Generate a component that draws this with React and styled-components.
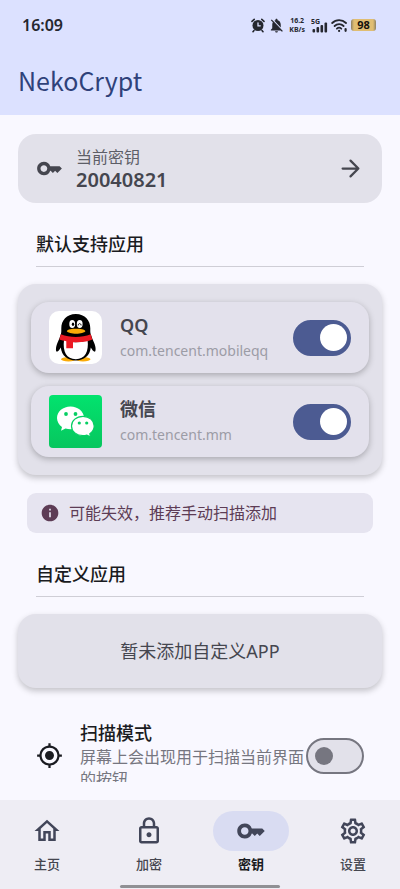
import React, { useState } from 'react'
import styled, { createGlobalStyle } from 'styled-components'
import {
  MdInfo,
  MdKey,
  MdMyLocation,
  MdNotificationsOff,
  MdOutlineHome,
  MdOutlineLock,
  MdOutlineSettings
} from 'react-icons/md'

const GlobalStyle = createGlobalStyle`
  * {
    box-sizing: border-box;
  }

  body {
    margin: 0;
    background: #f9f8ff;
    color: #1a1b21;
    font-family: 'Noto Sans', 'Noto Sans CJK SC', sans-serif;
  }

  h1, h2, h3, p {
    margin: 0;
  }
`

const Screen = styled.div`
  display: flex;
  flex-direction: column;
  height: 100vh;
`

const Header = styled.header`
  background: #dce1ff;
`

const StatusBar = styled.div`
  display: flex;
  align-items: center;
  justify-content: space-between;
  padding: 12px 24px 12px 22px;
  color: #25272f;
`

const Clock = styled.time`
  font-size: 16px;
  font-weight: 600;
  line-height: 26px;
`

const StatusIcons = styled.div`
  display: flex;
  align-items: center;
  gap: 3px;
`

const Speed = styled.div`
  margin: 0 3px 0 1px;
  font-size: 7px;
  font-weight: 700;
  line-height: 9px;
  text-align: center;
`

const SpeedLine = styled.span`
  display: block;
`

const Battery = styled.div`
  width: 25px;
  border-radius: 3px;
  background: linear-gradient(90deg, #8d8063, #e0bd72 12%, #e0bd72 88%, #8d8063);
  color: #15130d;
  font-size: 11px;
  font-weight: 700;
  line-height: 12px;
  text-align: center;
`

const AppTitle = styled.h1`
  padding: 12px 18px 17px;
  color: #2f417a;
  font-family: 'Noto Sans CJK SC', 'Noto Sans', sans-serif;
  font-size: 25px;
  font-weight: 400;
  line-height: 36px;
`

const Content = styled.main`
  flex: 1;
  min-height: 0;
  margin-bottom: 18px;
  padding: 19px 18px 0;
  overflow: hidden;
`

const KeyCard = styled.button`
  display: flex;
  align-items: center;
  gap: 13px;
  width: 100%;
  padding: 12px 18px;
  border: 0;
  border-radius: 18px;
  background: #e2e1ea;
  color: #45464f;
  font-family: inherit;
  text-align: left;
`

const KeyText = styled.span`
  flex: 1;
`

const KeyLabel = styled.span`
  display: block;
  color: #5d5e67;
  font-size: 16px;
  line-height: 22px;
`

const KeyValue = styled.strong`
  display: block;
  font-size: 20px;
  font-weight: 600;
  line-height: 23px;
`

const SectionTitle = styled.h2`
  margin: 28px 18px 17px;
  padding-bottom: 9px;
  border-bottom: 1px solid #cfced6;
  font-size: 18px;
  font-weight: 500;
  line-height: 26px;
`

const Panel = styled.div`
  border-radius: 18px;
  background: #e2e1ea;
  box-shadow: 0 3px 6px rgba(0, 0, 0, 0.22);
`

const AppList = styled(Panel)`
  display: grid;
  gap: 13px;
  padding: 18px 13px;
`

const AppRow = styled.label`
  display: flex;
  align-items: center;
  gap: 18px;
  padding: 9px 18px;
  border-radius: 18px;
  background: #e3e1ec;
  box-shadow: 0 2px 6px rgba(0, 0, 0, 0.26);
`

const AppLogo = styled.svg`
  flex: none;
  width: 53px;
  height: 53px;
`

const AppInfo = styled.span`
  flex: 1;
  min-width: 0;
`

const AppName = styled.span`
  display: block;
  color: #45464f;
  font-size: 18px;
  font-weight: 600;
  line-height: 26px;
`

const PackageName = styled.span`
  display: block;
  color: #9c9ca6;
  font-size: 14px;
  line-height: 26px;
`

const Switch = styled.input.attrs({ type: 'checkbox', role: 'switch' })`
  appearance: none;
  display: flex;
  flex: none;
  align-items: center;
  width: 58px;
  height: 36px;
  margin: 0;
  padding: 0 7px;
  border: 2px solid #767680;
  border-radius: 18px;
  background: #e2e1ea;

  &::before {
    content: '';
    width: 18px;
    height: 18px;
    border-radius: 50%;
    background: #767680;
  }

  &:checked {
    justify-content: flex-end;
    padding: 0 2px;
    border-color: #4c5b92;
    background: #4c5b92;
  }

  &:checked::before {
    width: 27px;
    height: 27px;
    background: #fff;
  }
`

const Notice = styled.div`
  display: flex;
  align-items: center;
  gap: 9px;
  margin: 18px 9px 0;
  padding: 8px 13px;
  border-radius: 9px;
  background: #e6e4f0;
  color: #5d3c55;
  font-size: 16px;
  line-height: 24px;
`

const EmptyPanel = styled(Panel)`
  padding: 24px 18px;
  color: #45464f;
  font-size: 18px;
  line-height: 26px;
  text-align: center;
`

const ScanRow = styled.label`
  display: flex;
  align-items: center;
  margin-top: 33px;
  padding: 0 18px;
`

const ScanText = styled.span`
  flex: 1;
  min-width: 0;
  padding-left: 17px;
`

const ScanTitle = styled.span`
  display: block;
  font-size: 18px;
  font-weight: 500;
  line-height: 25px;
`

const ScanHint = styled.span`
  display: block;
  color: #767680;
  font-size: 16px;
  line-height: 22px;
`

const BottomBar = styled.nav`
  background: #eeedf4;
`

const Tabs = styled.div`
  display: grid;
  grid-template-columns: repeat(4, 1fr);
  gap: 8px;
  padding: 11px 0;
`

const Tab = styled.a`
  display: flex;
  flex-direction: column;
  align-items: center;
  gap: 3px;
  color: ${props => props.$active ? '#1a1b21' : '#45464f'};
  font-size: 13px;
  font-weight: ${props => props.$active ? 600 : 500};
  line-height: 20px;
  text-decoration: none;
`

const TabIcon = styled.span`
  display: flex;
  align-items: center;
  justify-content: center;
  width: 76px;
  height: 40px;
  border-radius: 20px;
  background: ${props => props.$active ? '#d9dcf2' : 'transparent'};
  color: #424659;
`

const HomeIndicator = styled.div`
  width: 40%;
  height: 3px;
  margin: 0 auto 1px;
  border-radius: 2px;
  background: #909094;
`

const AlarmIcon = () => (
  <svg width='14' height='15' viewBox='0 0 14 15' fill='none' stroke='currentColor' strokeLinecap='round' aria-hidden='true'>
    <circle cx='7' cy='7.500' r='5.500' fill='currentColor' stroke='none' />
    <path d='M1 3.400l2.200-2M13 3.400l-2.200-2M3 12.500l-1 1.200M11 12.500l1 1.200' strokeWidth='1.600' />
    <path d='M7 4.800v3h2.300' stroke='#dce1ff' strokeWidth='1.300' />
  </svg>
)

const SignalIcon = () => (
  <svg width='17' height='15' viewBox='0 0 17 15' fill='currentColor' aria-hidden='true'>
    <text x='0' y='5.500' fontSize='7' fontWeight='700'>5G</text>
    <rect x='1.500' y='11' width='2.600' height='3.500' rx='1' />
    <rect x='5.500' y='9' width='2.600' height='5.500' rx='1' />
    <rect x='9.500' y='7' width='2.600' height='7.500' rx='1' />
    <rect x='13.500' y='4.500' width='2.600' height='10' rx='1' />
  </svg>
)

const WifiIcon = () => (
  <svg width='17' height='15' viewBox='0 0 17 15' fill='none' stroke='currentColor' strokeWidth='1.8' strokeLinecap='round' aria-hidden='true'>
    <path d='M1.200 5a9.800 9.800 0 0 1 13.800 0' />
    <path d='M3.600 8a6.300 6.300 0 0 1 9 0' />
    <path d='M5.900 10.700a3.200 3.200 0 0 1 4.400 0' />
    <circle cx='8.100' cy='12.900' r='1.100' fill='currentColor' stroke='none' />
    <path d='M14.600 11v1.800' strokeWidth='2.200' />
  </svg>
)

const ArrowIcon = () => (
  <svg width='27' height='27' viewBox='0 0 24 24' fill='none' stroke='currentColor' strokeWidth='2' strokeLinecap='round' strokeLinejoin='round' aria-hidden='true'>
    <path d='M5 12h14M12 5l7 7-7 7' />
  </svg>
)

const QQLogo = () => (
  <AppLogo viewBox='0 0 53 53' aria-hidden='true'>
    <rect width='53' height='53' rx='10' fill='#fff' />
    <ellipse cx='19.500' cy='48.200' rx='7.500' ry='2.200' fill='#faab07' />
    <ellipse cx='34' cy='48.200' rx='7.500' ry='2.200' fill='#faab07' />
    <path d='M26.800 3C17.500 3 12.300 9.500 12.300 17.500c0 2 .1 3.400-.3 5.200-1 3.300-2.200 6.200-3.600 9.300-1.700 4-1.800 7.800-.8 8.600.9.7 2.900-1.700 4.200-4.100.7 8 7 13 15 13s14.300-5 15-13c1.300 2.400 3.300 4.800 4.200 4.100 1-.8.9-4.600-.8-8.600-1.400-3.100-2.600-6-3.600-9.300-.4-1.800-.3-3.200-.3-5.200C41.300 9.500 36.100 3 26.800 3z' fill='#000' />
    <path d='M15 29c-1.500 11.500 2.500 19.200 11.800 19.200S40 40.500 38.600 29c-7 3-16.600 3-23.600 0z' fill='#fff' />
    <ellipse cx='23.200' cy='13' rx='2.900' ry='3.900' fill='#fff' />
    <ellipse cx='30.700' cy='13' rx='2.900' ry='3.900' fill='#fff' />
    <ellipse cx='24' cy='13.300' rx='1.200' ry='1.700' fill='#000' />
    <path d='M29.200 14c.1-2 2.700-2 2.900 0' fill='none' stroke='#000' strokeWidth='1' strokeLinecap='round' />
    <path d='M17.800 20.300c.8-2 5-2.500 9.300-2.500s8.500.5 9.300 2.500c-.8 1.200-5 2.500-9.300 2.500s-8.500-1.300-9.300-2.500z' fill='#faab07' />
    <path d='M11.800 23.300c9.500 3.500 20.500 3.500 30 0l1.500 5.200c-2.800 1.400-10 3.200-19.300 2.800v5.900h-6.700v-7c-2.600-.4-5.100-1-6.900-1.700z' fill='#eb1923' />
  </AppLogo>
)

const WeChatLogo = () => (
  <AppLogo viewBox='0 0 53 53' aria-hidden='true'>
    <defs>
      <linearGradient id='wechat' x1='0' y1='0' x2='0' y2='1'>
        <stop offset='0' stopColor='#02e36e' />
        <stop offset='1' stopColor='#07c65e' />
      </linearGradient>
    </defs>
    <rect width='53' height='53' rx='4' fill='url(#wechat)' />
    <path d='M21.500 11.500c-7.500 0-13.500 5-13.500 11.500 0 3.600 1.900 6.800 5 8.900l-1 3.900 4.500-2.400c1.600.5 3.300.8 5 .8 7.500 0 13.500-5 13.500-11.300S29 11.500 21.500 11.500z' fill='#fff' />
    <circle cx='17' cy='19' r='1.900' fill='#06cf63' />
    <circle cx='26.500' cy='19' r='1.900' fill='#06cf63' />
    <path d='M34 21.300c-6.500 0-11.500 4.200-11.500 9.700s5 9.700 11.500 9.700c1.400 0 2.700-.2 3.900-.6l3.700 2-.8-3.300c2.700-1.800 4.400-4.600 4.400-7.800 0-5.500-4.900-9.700-11.200-9.700z' fill='#fff' stroke='#06cf63' strokeWidth='1.200' />
    <circle cx='30.300' cy='28' r='1.600' fill='#06cf63' />
    <circle cx='37.700' cy='28' r='1.600' fill='#06cf63' />
  </AppLogo>
)

const supportedApps = [
  { name: 'QQ', packageName: 'com.tencent.mobileqq', Logo: QQLogo },
  { name: '微信', packageName: 'com.tencent.mm', Logo: WeChatLogo }
]

const tabs = [
  { id: 'home', label: '主页', Icon: MdOutlineHome },
  { id: 'crypto', label: '加密', Icon: MdOutlineLock },
  { id: 'key', label: '密钥', Icon: MdKey },
  { id: 'settings', label: '设置', Icon: MdOutlineSettings }
]

export default function App () {
  const [active, setActive] = useState('key')

  return (
    <Screen lang='zh-CN'>
      <GlobalStyle />

      <Header>
        <StatusBar>
          <Clock>16:09</Clock>
          <StatusIcons>
            <AlarmIcon />
            <MdNotificationsOff size={17} />
            <Speed>
              <SpeedLine>16.2</SpeedLine>
              <SpeedLine>KB/s</SpeedLine>
            </Speed>
            <SignalIcon />
            <WifiIcon />
            <Battery>98</Battery>
          </StatusIcons>
        </StatusBar>
        <AppTitle>NekoCrypt</AppTitle>
      </Header>

      <Content>
        <KeyCard type='button'>
          <MdKey size={27} />
          <KeyText>
            <KeyLabel>当前密钥</KeyLabel>
            <KeyValue>20040821</KeyValue>
          </KeyText>
          <ArrowIcon />
        </KeyCard>

        <SectionTitle>默认支持应用</SectionTitle>
        <AppList>
          {supportedApps.map(({ name, packageName, Logo }) => (
            <AppRow key={packageName}>
              <Logo />
              <AppInfo>
                <AppName>{name}</AppName>
                <PackageName>{packageName}</PackageName>
              </AppInfo>
              <Switch defaultChecked />
            </AppRow>
          ))}
        </AppList>

        <Notice>
          <MdInfo size={20} />
          可能失效，推荐手动扫描添加
        </Notice>

        <SectionTitle>自定义应用</SectionTitle>
        <EmptyPanel>暂未添加自定义APP</EmptyPanel>

        <ScanRow>
          <MdMyLocation size={27} />
          <ScanText>
            <ScanTitle>扫描模式</ScanTitle>
            <ScanHint>屏幕上会出现用于扫描当前界面的按钮</ScanHint>
          </ScanText>
          <Switch />
        </ScanRow>
      </Content>

      <BottomBar>
        <Tabs>
          {tabs.map(({ id, label, Icon }) => (
            <Tab key={id} href={'#' + id} $active={id === active} onClick={() => setActive(id)}>
              <TabIcon $active={id === active}><Icon size={30} /></TabIcon>
              {label}
            </Tab>
          ))}
        </Tabs>
        <HomeIndicator />
      </BottomBar>
    </Screen>
  )
}
